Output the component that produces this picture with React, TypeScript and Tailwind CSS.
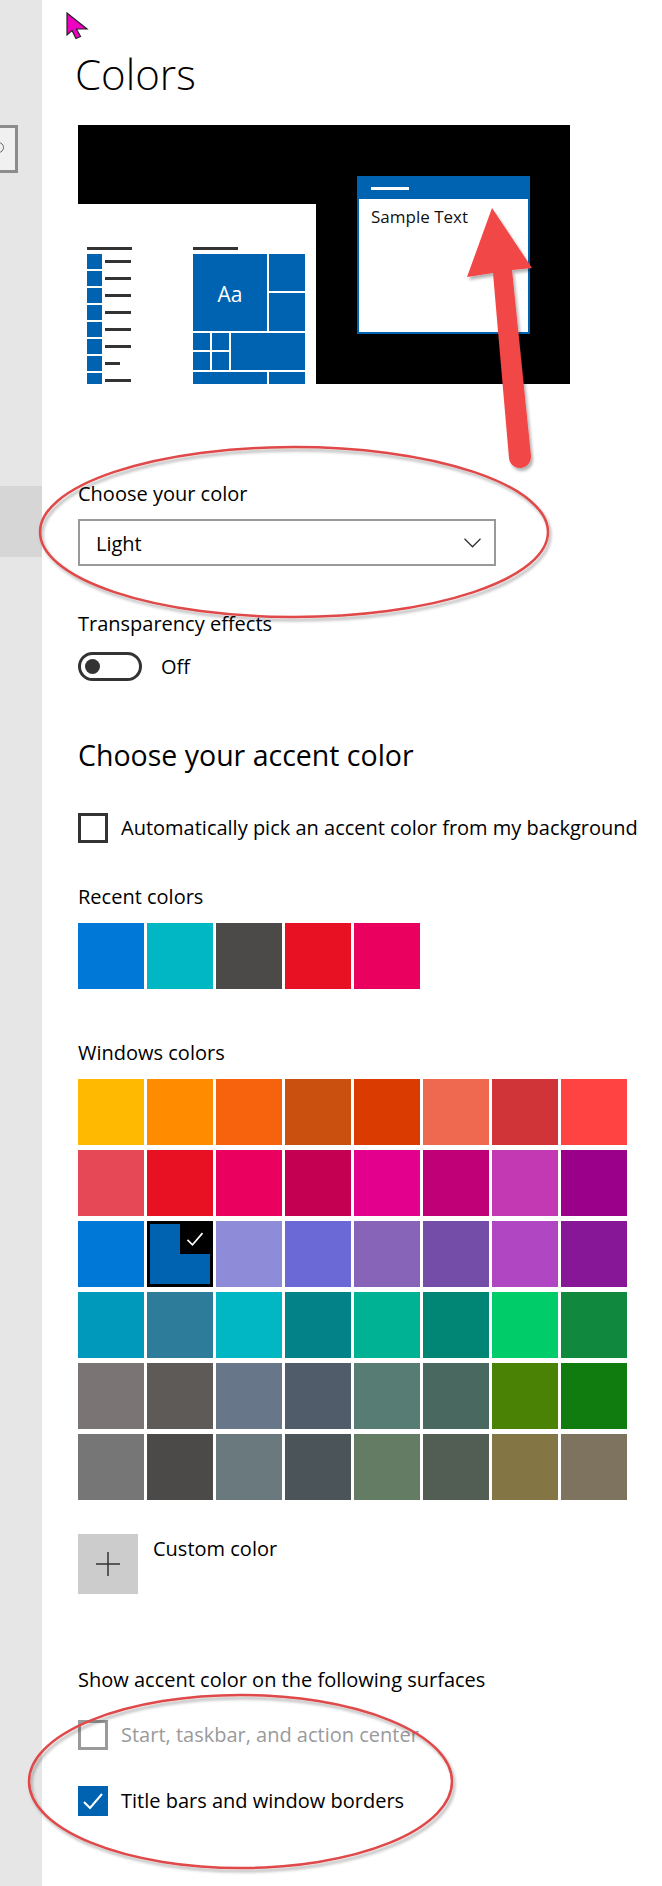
import React from 'react';

const recentColors = ['#0078d7', '#00b7c3', '#4c4a48', '#e81123', '#ea005e'];

const windowsColors = [
  ['#ffb900', '#ff8c00', '#f7630c', '#ca5010', '#da3b01', '#ef6950', '#d13438', '#ff4343'],
  ['#e74856', '#e81123', '#ea005e', '#c30052', '#e3008c', '#bf0077', '#c239b3', '#9a0089'],
  ['#0078d7', '#0063b1', '#8e8cd8', '#6b69d6', '#8764b8', '#744da9', '#b146c2', '#881798'],
  ['#0099bc', '#2d7d9a', '#00b7c3', '#038387', '#00b294', '#018574', '#00cc6a', '#10893e'],
  ['#7a7574', '#5d5a58', '#68768a', '#515c6b', '#567c73', '#486860', '#498205', '#107c10'],
  ['#767676', '#4c4a48', '#69797e', '#4a5459', '#647c64', '#525e54', '#847545', '#7e735f'],
];

const listLines = [26, 26, 26, 26, 26, 26, 15, 26];

function Check({ className }: { className?: string }) {
  return (
    <svg viewBox="0 0 24 24" className={className} fill="none" stroke="currentColor" strokeWidth="2">
      <path d="M3 13 L9 19 L21 5" />
    </svg>
  );
}

function Preview() {
  return (
    <div className="mt-[26px] flex h-[259px] w-[492px] items-start overflow-hidden bg-black">
      {/* start menu */}
      <div className="flex h-[180px] w-[238px] shrink-0 items-start self-end overflow-hidden bg-white">
        <div className="ml-[9px] mt-[43px] w-[45px] shrink-0">
          <div className="h-[3px] w-[45px] bg-[#333]" />
          <div className="mt-[4px] flex flex-col gap-[2px]">
            {listLines.map((w, i) => (
              <div key={i} className="flex h-[15px] items-center gap-[3px]">
                <div className="h-[15px] w-[15px] bg-[#0063b1]" />
                <div className="h-[3px] bg-[#333]" style={{ width: w }} />
              </div>
            ))}
          </div>
        </div>
        <div className="ml-[61px] mt-[43px] w-[112px] shrink-0">
          <div className="h-[3px] w-[45px] bg-[#333]" />
          <div className="mt-[4px] grid grid-cols-[17px_17px_36px_36px] grid-rows-[37px_38px_17px_18px_12px] gap-[2px]">
            <div className="col-span-3 row-span-2 flex items-center justify-center bg-[#0063b1] pt-[3px] text-[21px] leading-none text-white">
              Aa
            </div>
            <div className="bg-[#0063b1]" />
            <div className="bg-[#0063b1]" />
            <div className="bg-[#0063b1]" />
            <div className="bg-[#0063b1]" />
            <div className="col-span-2 row-span-2 bg-[#0063b1]" />
            <div className="bg-[#0063b1]" />
            <div className="bg-[#0063b1]" />
            <div className="col-span-3 bg-[#0063b1]" />
            <div className="bg-[#0063b1]" />
          </div>
        </div>
      </div>
      {/* sample window */}
      <div className="ml-[41px] mt-[51px] flex h-[158px] w-[173px] shrink-0 flex-col border-2 border-[#0063b1] bg-white">
        <div className="h-[21px] bg-[#0063b1] pl-[12px] pt-[9px]">
          <div className="h-[3px] w-[38px] bg-white" />
        </div>
        <div className="mt-[6px] pl-[12px] text-[17px] leading-[24px] text-[#111]">Sample Text</div>
      </div>
    </div>
  );
}

function Checkbox({ checked, disabled, label }: { checked?: boolean; disabled?: boolean; label: string }) {
  return (
    <div className="flex items-center gap-[13px]">
      {checked ? (
        <div className="flex h-[30px] w-[30px] items-center justify-center bg-[#0063b1] text-white">
          <Check className="h-[24px] w-[24px]" />
        </div>
      ) : (
        <div
          className={
            disabled
              ? 'h-[30px] w-[30px] border-[3px] border-[#9a9a9a]'
              : 'h-[30px] w-[30px] border-[3px] border-[#333]'
          }
        />
      )}
      <span className={disabled ? 'text-[20px] leading-[28px] text-[#9a9a9a]' : 'text-[20px] leading-[28px] text-black'}>
        {label}
      </span>
    </div>
  );
}

export default function App() {
  return (
    <div className="relative flex min-h-[1886px] w-full bg-white font-['Open_Sans',sans-serif] text-black">
      {/* nav strip */}
      <div className="flex w-[42px] shrink-0 flex-col bg-[#e6e6e6]">
        <div className="mt-[125px] h-[48px] w-[18px] overflow-hidden border-[3px] border-l-0 border-[#8c8c8c] bg-[#f0f0f0]">
          <div className="-ml-[7px] mt-[14px] h-[11px] w-[11px] rounded-full border-[1.5px] border-[#666]" />
        </div>
        <div className="mt-[313px] h-[71px] bg-[#d6d6d6]" />
      </div>

      {/* main */}
      <div className="flex-1 pl-[36px] pt-[49px]">
        <h1 className="-ml-[3px] text-[42px] font-light leading-[50px]">Colors</h1>

        <Preview />

        <div className="mt-[96px] text-[20px] leading-[28px]">Choose your color</div>
        <div className="mt-[11px] flex h-[47px] w-[418px] items-center justify-between border-2 border-[#999] pl-[16px] pr-[13px]">
          <span className="pt-[2px] text-[20px] leading-[28px]">Light</span>
          <svg width="17" height="10" viewBox="0 0 17 10" fill="none" stroke="#333" strokeWidth="1.3">
            <path d="M0.5 0.8 L8.5 8.8 L16.5 0.8" />
          </svg>
        </div>

        <div className="mt-[44px] text-[20px] leading-[28px]">Transparency effects</div>
        <div className="mt-[14px] flex items-center gap-[19px]">
          <div className="flex h-[29px] w-[64px] items-center rounded-full border-[3px] border-[#333] pl-[4px]">
            <div className="h-[15px] w-[15px] rounded-full bg-[#333]" />
          </div>
          <span className="text-[20px] leading-[28px]">Off</span>
        </div>

        <h2 className="mt-[56px] text-[28.5px] leading-[36px]">Choose your accent color</h2>
        <div className="mt-[40px]">
          <Checkbox label="Automatically pick an accent color from my background" />
        </div>

        <div className="mt-[40px] text-[20px] leading-[28px]">Recent colors</div>
        <div className="mt-[12px] flex gap-[3px]">
          {recentColors.map((c) => (
            <div key={c} className="h-[66px] w-[66px]" style={{ backgroundColor: c }} />
          ))}
        </div>

        <div className="mt-[50px] text-[20px] leading-[28px]">Windows colors</div>
        <div className="mt-[12px] grid grid-cols-[repeat(8,66px)] gap-x-[3px] gap-y-[5px]">
          {windowsColors.flat().map((c, i) =>
            i === 17 ? (
              <div key={i} className="relative h-[66px] border-[3px] border-black" style={{ backgroundColor: c }}>
                <div className="absolute right-0 top-0 flex h-[30px] w-[30px] items-center justify-center bg-black text-white">
                  <Check className="h-[20px] w-[20px]" />
                </div>
              </div>
            ) : (
              <div key={i} className="h-[66px]" style={{ backgroundColor: c }} />
            )
          )}
        </div>

        <div className="mt-[34px] flex items-start gap-[15px]">
          <div className="flex h-[60px] w-[60px] items-center justify-center bg-[#cccccc]">
            <svg width="24" height="24" viewBox="0 0 24 24" stroke="#333" strokeWidth="1.5">
              <path d="M12 0 V24 M0 12 H24" />
            </svg>
          </div>
          <span className="mt-[1px] text-[20px] leading-[28px]">Custom color</span>
        </div>

        <div className="mt-[72px] text-[20px] leading-[28px]">Show accent color on the following surfaces</div>
        <div className="mt-[26px]">
          <Checkbox disabled label="Start, taskbar, and action center" />
        </div>
        <div className="mt-[36px]">
          <Checkbox checked label="Title bars and window borders" />
        </div>
      </div>

      {/* annotations drawn over the screenshot */}
      <svg className="pointer-events-none absolute left-0 top-0" width="662" height="1886" viewBox="0 0 662 1886">
        <defs>
          <filter id="shadow" x="-10%" y="-10%" width="120%" height="130%">
            <feDropShadow dx="2" dy="3" stdDeviation="1.5" floodColor="#000" floodOpacity="0.3" />
          </filter>
        </defs>
        <path
          d="M492 208 L532 268 L512 270 L531 456 A11 11 0 0 1 509 458 L493 273 L467 277 Z"
          fill="#f24646"
          filter="url(#shadow)"
        />
        <ellipse cx="294" cy="532" rx="254" ry="85" fill="none" stroke="#e04848" strokeWidth="2.5" filter="url(#shadow)" />
        <ellipse cx="240.5" cy="1781.5" rx="211.5" ry="86.5" fill="none" stroke="#e04848" strokeWidth="2.5" filter="url(#shadow)" />
        <path d="M67 13 L67 35 L72 30.5 L76 38.5 L80.5 36.5 L76.5 29 L87 29 Z" fill="#ee00c0" stroke="#222" strokeWidth="1.2" />
      </svg>
    </div>
  );
}
